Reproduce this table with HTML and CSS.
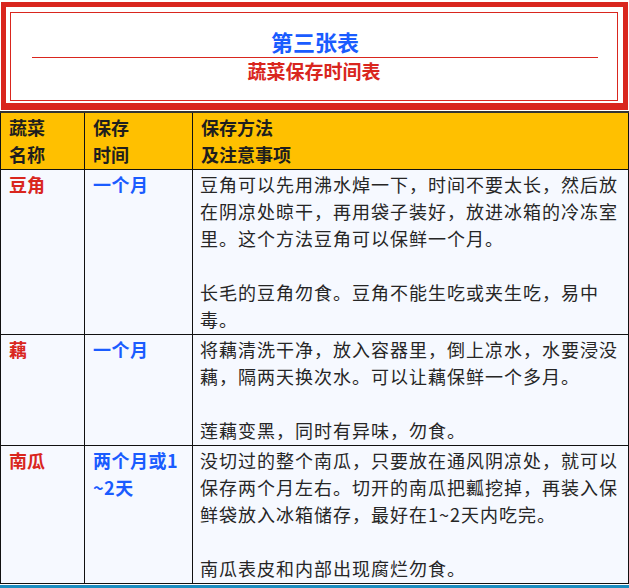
FILE: index.html
```html
<!DOCTYPE html>
<html lang="zh-CN">
<head>
<meta charset="utf-8">
<title>第三张表</title>
<link rel="stylesheet" href="styles.css">
</head>
<body>
<div class="title-box">
  <div class="title-inner">
    <div class="title-main">第三张表</div>
    <div class="title-sub">蔬菜保存时间表</div>
  </div>
</div>
<table class="veg-table">
  <colgroup>
    <col class="c1">
    <col class="c2">
    <col class="c3">
  </colgroup>
  <thead>
    <tr>
      <th>蔬菜<br>名称</th>
      <th>保存<br>时间</th>
      <th>保存方法<br>及注意事项</th>
    </tr>
  </thead>
  <tbody>
    <tr>
      <td class="name">豆角</td>
      <td class="time">一个月</td>
      <td class="desc">豆角可以先用沸水焯一下，时间不要太长，然后放在阴凉处晾干，再用袋子装好，放进冰箱的冷冻室里。这个方法豆角可以保鲜一个月。<br><br>长毛的豆角勿食。豆角不能生吃或夹生吃，易中毒。</td>
    </tr>
    <tr>
      <td class="name">藕</td>
      <td class="time">一个月</td>
      <td class="desc">将藕清洗干净，放入容器里，倒上凉水，水要浸没藕，隔两天换次水。可以让藕保鲜一个多月。<br><br>莲藕变黑，同时有异味，勿食。</td>
    </tr>
    <tr>
      <td class="name">南瓜</td>
      <td class="time">两个月或1<br>~2天</td>
      <td class="desc">没切过的整个南瓜，只要放在通风阴凉处，就可以保存两个月左右。切开的南瓜把瓤挖掉，再装入保鲜袋放入冰箱储存，最好在1~2天内吃完。<br><br>南瓜表皮和内部出现腐烂勿食。</td>
    </tr>
  </tbody>
</table>
<div class="next-rule"></div>
</body>
</html>
```
FILE: styles.css
```css
html, body {
  margin: 0;
  padding: 0;
  background: #ffffff;
}

body {
  font-family: "Noto Sans CJK SC", "Noto Sans", sans-serif;
  color: #222222;
  overflow: hidden;
}

.title-box {
  margin: 2px 1px 1px 1px;
  border: 5px solid #d9261e;
  border-bottom-width: 7px;
  padding: 5px 5px 2px 4px;
  background: #ffffff;
}

.title-inner {
  border: 1px solid #d9261e;
  padding: 12px 0 16px 0;
  text-align: center;
}

.title-main {
  font-size: 22px;
  line-height: 32px;
  font-weight: 700;
  color: #1a5cff;
  margin: 0 19px 0 21px;
  border-bottom: 1px solid #d9261e;
}

.title-sub {
  font-size: 19px;
  line-height: 26px;
  font-weight: 700;
  color: #d9261e;
}

.veg-table {
  width: 629px;
  border-collapse: collapse;
  table-layout: fixed;
  border-top: 2px solid #333333;
}

.veg-table .c1 { width: 84px; }
.veg-table .c2 { width: 108px; }

.veg-table th,
.veg-table td {
  border: 1px solid #111111;
  padding: 1px 5px 1px 8px;
  vertical-align: top;
  text-align: left;
  font-size: 18px;
  line-height: 27px;
}

.veg-table th {
  background: #ffc000;
  font-weight: 700;
  color: #1e1e1e;
}

.veg-table td {
  background: #f6f9ff;
}

.veg-table td.name {
  color: #d9261e;
  font-weight: 700;
}

.veg-table td.time {
  color: #1a5cff;
  font-weight: 700;
  letter-spacing: 0.5px;
}

.veg-table td.desc {
  letter-spacing: 1px;
  padding-left: 7px;
  color: #262626;
}

.next-rule {
  margin-top: 1px;
  height: 0;
  border-top: 3px solid #1b8dc0;
}
```
